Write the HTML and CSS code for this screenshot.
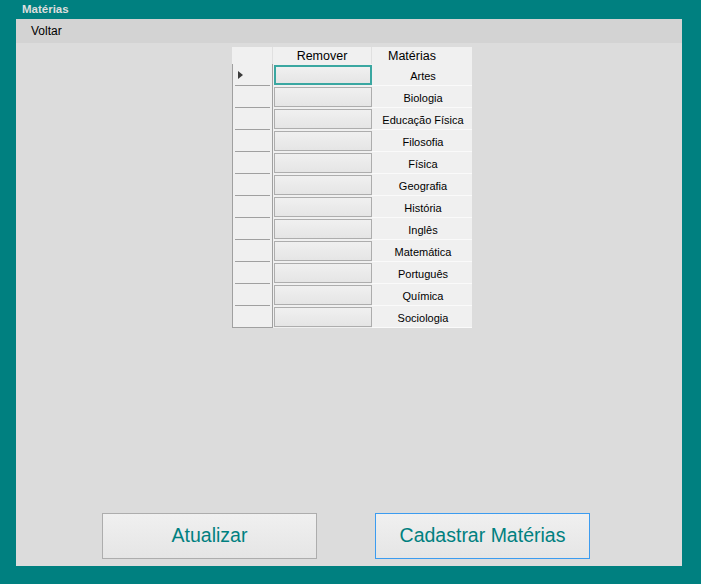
FILE: index.html
```html
<!DOCTYPE html>
<html lang="pt">
<head>
<meta charset="utf-8">
<title>Matérias</title>
<link rel="stylesheet" href="styles.css">
</head>
<body>
<div class="window">
  <div class="titlebar">Matérias</div>
  <div class="client">
    <div class="menubar"><span class="menu-item">Voltar</span></div>
    <div class="content">
      <div class="grid">
        <div class="row head">
          <div class="rh"></div>
          <div class="c1">Remover</div>
          <div class="c2">Matérias</div>
        </div>
        <div class="row current">
          <div class="rh"><span class="arrow"></span></div>
          <div class="c1"><span class="cellbtn focus"></span></div>
          <div class="c2">Artes</div>
        </div>
        <div class="row"><div class="rh"></div><div class="c1"><span class="cellbtn"></span></div><div class="c2">Biologia</div></div>
        <div class="row"><div class="rh"></div><div class="c1"><span class="cellbtn"></span></div><div class="c2">Educação Física</div></div>
        <div class="row"><div class="rh"></div><div class="c1"><span class="cellbtn"></span></div><div class="c2">Filosofia</div></div>
        <div class="row"><div class="rh"></div><div class="c1"><span class="cellbtn"></span></div><div class="c2">Física</div></div>
        <div class="row"><div class="rh"></div><div class="c1"><span class="cellbtn"></span></div><div class="c2">Geografia</div></div>
        <div class="row"><div class="rh"></div><div class="c1"><span class="cellbtn"></span></div><div class="c2">História</div></div>
        <div class="row"><div class="rh"></div><div class="c1"><span class="cellbtn"></span></div><div class="c2">Inglês</div></div>
        <div class="row"><div class="rh"></div><div class="c1"><span class="cellbtn"></span></div><div class="c2">Matemática</div></div>
        <div class="row"><div class="rh"></div><div class="c1"><span class="cellbtn"></span></div><div class="c2">Português</div></div>
        <div class="row"><div class="rh"></div><div class="c1"><span class="cellbtn"></span></div><div class="c2">Química</div></div>
        <div class="row last"><div class="rh"></div><div class="c1"><span class="cellbtn"></span></div><div class="c2">Sociologia</div></div>
      </div>
      <div class="actions">
        <button class="btn">Atualizar</button>
        <button class="btn primary">Cadastrar Matérias</button>
      </div>
    </div>
  </div>
</div>
</body>
</html>
```

FILE: styles.css
```css
html, body {
  margin: 0;
  padding: 0;
}
body {
  background: #008080;
  font-family: "Liberation Sans", Arial, sans-serif;
  width: 701px;
  height: 584px;
  overflow: hidden;
}
.window {
  display: flex;
  flex-direction: column;
  padding: 0 19px 18px 16px;
}
.titlebar {
  height: 19px;
  line-height: 18px;
  padding-left: 6px;
  color: #dedede;
  font-weight: bold;
  font-size: 11.5px;
}
.client {
  width: 666px;
  height: 547px;
  display: flex;
  flex-direction: column;
}
.menubar {
  height: 24px;
  background: #d3d3d3;
  display: flex;
  align-items: center;
}
.menu-item {
  padding-left: 15px;
  font-size: 12px;
  color: #000;
}
.content {
  flex: 1;
  background: #dcdcdc;
  display: flex;
  flex-direction: column;
}
.grid {
  margin: 4px 0 0 216px;
  width: 240px;
  display: flex;
  flex-direction: column;
}
.row {
  display: flex;
  height: 22px;
}
.row.head {
  height: 17px;
}
.rh {
  width: 39px;
  background: #f0f0f0;
  border-left: 1px solid #a0a0a0;
  border-right: 1px solid #a0a0a0;
  position: relative;
  display: flex;
  align-items: center;
}
.row .rh::after {
  content: "";
  position: absolute;
  left: 2px;
  right: 2px;
  bottom: 0;
  height: 1px;
  background: #a0a0a0;
}
.row.last .rh::after {
  left: -1px;
  right: -1px;
}
.row.head .rh {
  border-left: 1px solid #f0f0f0;
  border-right: 1px solid #e0e0e0;
}
.row.head .rh::after {
  display: none;
}
.c1 {
  width: 99px;
  background: #f0f0f0;
  display: flex;
  align-items: flex-start;
  justify-content: center;
  padding-top: 1px;
  box-sizing: border-box;
}
.c2 {
  width: 100px;
  background: #f0f0f0;
  border-bottom: 1px solid #fafafa;
  box-sizing: border-box;
  display: flex;
  align-items: center;
  justify-content: center;
  font-size: 11px;
  color: #000;
  padding: 2px 0 0 2px;
}
.row.head .c1,
.row.head .c2 {
  font-size: 12.5px;
  padding: 0;
  align-items: center;
  border-bottom: 0;
}
.row.head .c1 {
  border-right: 1px solid #e0e0e0;
}
.row.head .c2 {
  justify-content: flex-start;
  padding-left: 16px;
}
.cellbtn {
  display: block;
  width: 98px;
  height: 20px;
  box-sizing: border-box;
  border: 1px solid #adadad;
  background: linear-gradient(#f0f0f0, #e5e5e5);
}
.cellbtn.focus {
  border: 2px solid #3aa7a1;
}
.arrow {
  display: block;
  width: 0;
  height: 0;
  margin-left: 5px;
  border-top: 4px solid transparent;
  border-bottom: 4px solid transparent;
  border-left: 5px solid #3c3c3c;
}
.actions {
  margin-top: auto;
  padding: 0 0 7px 86px;
  display: flex;
  gap: 58px;
}
.btn {
  width: 215px;
  height: 46px;
  box-sizing: border-box;
  border: 1px solid #adadad;
  background: linear-gradient(#f0f0f0, #e5e5e5);
  color: #008080;
  font-family: "Liberation Sans", Arial, sans-serif;
  font-size: 19.5px;
  padding: 0 0 1px 0;
  margin: 0;
}
.btn.primary {
  border-color: #3c9cf0;
}
```
